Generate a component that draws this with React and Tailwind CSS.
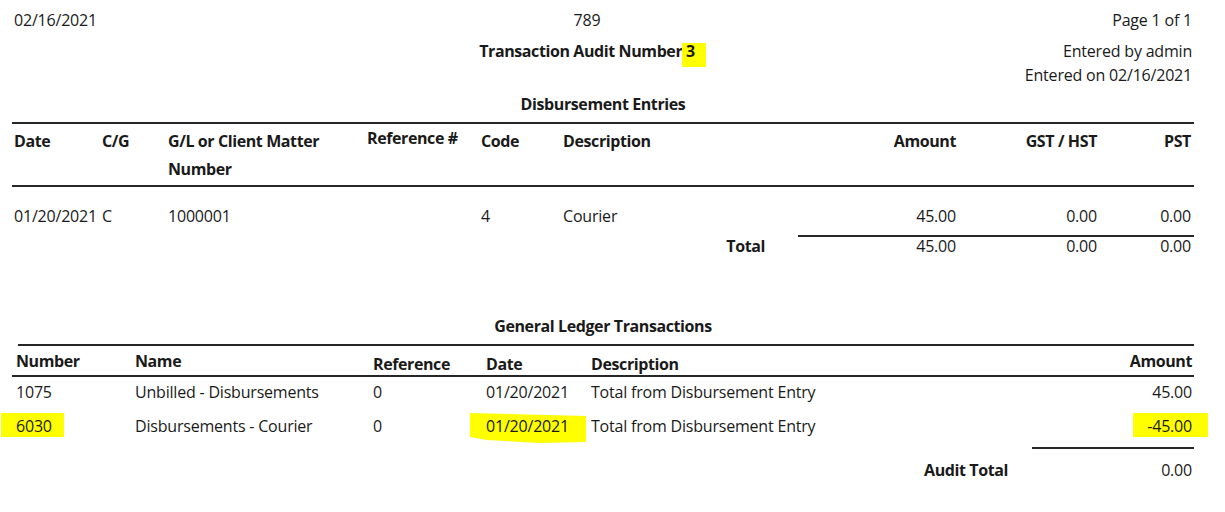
import React from 'react';

const line = 'border-t-2 border-[#262626]';

const Hl = ({ children, className }) => (
  <span className="relative inline-block">
    <span className={`absolute bg-[#ffff00] ${className}`} />
    <span className="relative">{children}</span>
  </span>
);

export default function App() {
  const t1 = 'grid grid-cols-[88px_66px_199px_114px_82px_1fr_150px_141px_94px]';
  const t2 = 'grid grid-cols-[119px_238px_113px_105px_1fr_160px]';

  return (
    <div className="w-[1225px] h-[512px] bg-white text-[#1a1a1a] font-['Open_Sans',sans-serif] text-[16px] leading-[24px] tracking-[-0.2px] overflow-hidden">
      {/* page header */}
      <div className="pt-[8px] pl-[14px] pr-[33px]">
        <div className="flex h-[24px]">
          <div className="w-[423px]">02/16/2021</div>
          <div className="w-[300px] text-center">789</div>
          <div className="flex-1 text-right">Page 1 of 1</div>
        </div>
        <div className="flex h-[24px] mt-[7px]">
          <div className="w-[423px]" />
          <div className="w-[300px] text-center font-bold tracking-[-0.4px]">
            Transaction Audit Number{' '}
            <Hl className="left-[-4px] w-[24px] top-[4px] h-[24px]">3</Hl>
          </div>
          <div className="flex-1 text-right">Entered by admin</div>
        </div>
        <div className="flex h-[24px]">
          <div className="flex-1 text-right">Entered on 02/16/2021</div>
        </div>
      </div>

      {/* Disbursement entries */}
      <div className="mx-[12px] w-[1182px]">
        <div className="mt-[5px] text-center font-bold tracking-[-0.4px]">Disbursement Entries</div>
        <div className={`mt-[6px] ${line}`} />

        <div className={`${t1} pl-[2px] pr-[3px] pt-[3px] font-bold leading-[28px] tracking-[-0.4px]`}>
          <div>Date</div>
          <div>C/G</div>
          <div>G/L or Client Matter<br />Number</div>
          <div className="mt-[-3px]">Reference #</div>
          <div>Code</div>
          <div>Description</div>
          <div className="text-right">Amount</div>
          <div className="text-right">GST / HST</div>
          <div className="text-right">PST</div>
        </div>
        <div className={`mt-[2px] ${line}`} />

        <div className={`${t1} pl-[2px] pr-[3px] pt-[17px]`}>
          <div>01/20/2021</div>
          <div>C</div>
          <div>1000001</div>
          <div />
          <div>4</div>
          <div>Courier</div>
          <div className="text-right">45.00</div>
          <div className="text-right">0.00</div>
          <div className="text-right">0.00</div>
        </div>
        <div className={`mt-[7px] ml-[786px] ${line}`} />
        <div className={`${t1} pl-[2px] pr-[3px] leading-[20px] mt-[-1px]`}>
          <div className="col-span-5" />
          <div className="text-right pr-[41px] font-bold tracking-[-0.4px]">Total</div>
          <div className="text-right">45.00</div>
          <div className="text-right">0.00</div>
          <div className="text-right">0.00</div>
        </div>

        {/* General ledger */}
        <div className="mt-[58px] text-center font-bold tracking-[-0.4px]">General Ledger Transactions</div>
        <div className={`mt-[6px] ml-[6px] ${line}`} />
        <div className={`${t2} h-[29px] pl-[4px] pr-[2px] font-bold tracking-[-0.4px]`}>
          <div className="pt-[3px]">Number</div>
          <div className="pt-[3px]">Name</div>
          <div className="pt-[6px]">Reference</div>
          <div className="pt-[6px]">Date</div>
          <div className="pt-[6px]">Description</div>
          <div className="pt-[3px] text-right">Amount</div>
        </div>
        <div className={line} />

        <div className={`${t2} pl-[4px] pr-[2px] pt-[3px]`}>
          <div>1075</div>
          <div>Unbilled - Disbursements</div>
          <div>0</div>
          <div>01/20/2021</div>
          <div>Total from Disbursement Entry</div>
          <div className="text-right">45.00</div>
        </div>
        <div className={`${t2} pl-[4px] pr-[2px] mt-[10px]`}>
          <div className="relative">
            <span className="absolute left-[-15px] top-[-1px] w-[63px] h-[24px] bg-[#ffff00]" />
            <span className="relative">6030</span>
          </div>
          <div>Disbursements - Courier</div>
          <div>0</div>
          <div className="relative">
            <svg className="absolute left-[-17px] top-[-1px]" width="118" height="31" viewBox="0 0 118 31">
              <polygon points="1,0 117,3 117,29 71,30 18,27 1,24" fill="#ffff00" />
            </svg>
            <span className="relative">01/20/2021</span>
          </div>
          <div>Total from Disbursement Entry</div>
          <div className="text-right">
            <Hl className="left-[-14px] right-[-16px] top-[-1px] h-[24px]">-45.00</Hl>
          </div>
        </div>
        <div className={`mt-[9px] ml-[1020px] ${line}`} />
        <div className={`${t2} pl-[4px] pr-[2px] mt-[9px]`}>
          <div className="col-span-4" />
          <div className="text-right pr-[24px] font-bold tracking-[-0.4px]">Audit Total</div>
          <div className="text-right">0.00</div>
        </div>
      </div>
    </div>
  );
}
